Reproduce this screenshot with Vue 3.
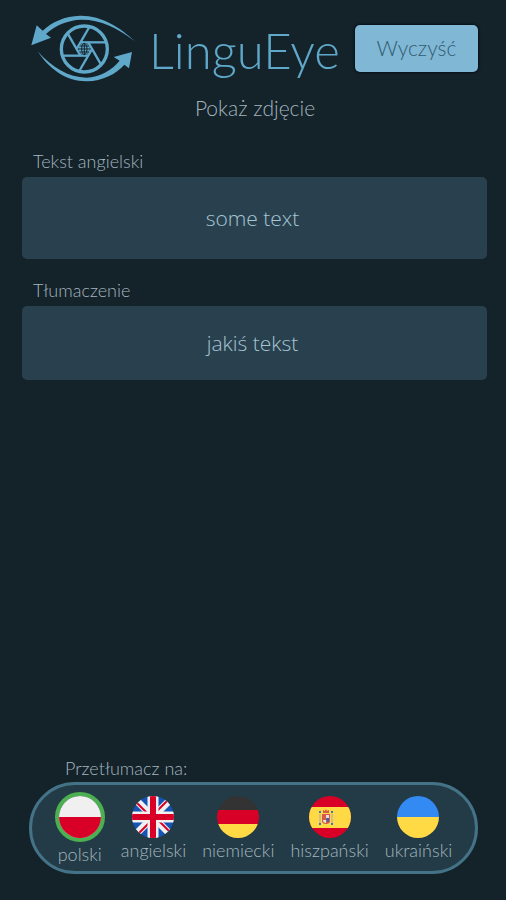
<script setup>
import { ref } from 'vue'

const source = ref('some text')
const translation = ref('jakiś tekst')
const selected = ref('pl')

const languages = [
  { code: 'pl', name: 'polski' },
  { code: 'en', name: 'angielski' },
  { code: 'de', name: 'niemiecki' },
  { code: 'es', name: 'hiszpański' },
  { code: 'uk', name: 'ukraiński' },
]

const bladeAngles = [0, 60, 120, 180, 240, 300]

function clearAll() {
  source.value = ''
  translation.value = ''
}
</script>

<template>
  <div class="app">
    <header class="header">
      <svg class="logo" viewBox="30 25 321 210" aria-hidden="true">
        <g fill="#5fa8c9">
          <path d="M345 110 C300 68 245 32 180 33 C135 34 95 52 68 78 L50 62 L34 122 L93 99 L78 88 C105 62 145 46 183 45 C240 44 290 68 345 110 Z" />
          <path d="M53 140 C85 190 135 230 200 230 C248 229 290 207 313 180 L327 191 L336 142 L281 157 L299 168 C275 197 238 218 200 219 C145 219 95 187 53 140 Z" />
        </g>
        <g fill="none" stroke="#5fa8c9" stroke-width="7">
          <circle cx="193" cy="133" r="69" stroke-width="10" />
          <path v-for="a in bladeAngles" :key="a" d="M181 113 H256" :transform="`rotate(${a} 193 133)`" />
        </g>
        <circle cx="193" cy="133" r="17" fill="#5fa8c9" />
        <g fill="none" stroke="#14222a" stroke-width="3">
          <ellipse cx="193" cy="133" rx="8" ry="17" />
          <path d="M193 115 V151 M175 133 H211 M179 124 H207 M179 142 H207" />
        </g>
      </svg>
      <h1 class="brand">LinguEye</h1>
      <button class="clear" type="button" @click="clearAll">Wyczyść</button>
    </header>

    <button class="show-photo" type="button">Pokaż zdjęcie</button>

    <main class="fields">
      <label class="label" for="source">Tekst angielski</label>
      <input id="source" v-model="source" class="box box-source" type="text" />
      <label class="label label-next" for="translation">Tłumaczenie</label>
      <input id="translation" v-model="translation" class="box" type="text" />
    </main>

    <footer class="footer">
      <p id="target-label" class="target-label">Przetłumacz na:</p>
      <div class="languages" role="group" aria-labelledby="target-label">
        <button
          v-for="lang in languages"
          :key="lang.code"
          class="language"
          type="button"
          :aria-pressed="selected === lang.code"
          @click="selected = lang.code"
        >
          <span class="flag" :class="{ active: selected === lang.code }">
            <svg viewBox="0 0 42 42" aria-hidden="true">
              <template v-if="lang.code === 'pl'">
                <rect width="42" height="42" fill="#f0f0f0" />
                <rect y="21" width="42" height="21" fill="#d80027" />
              </template>
              <template v-else-if="lang.code === 'en'">
                <rect width="42" height="42" fill="#1454b4" />
                <path d="M4 4 L38 38 M38 4 L4 38" stroke="#f0f0f0" stroke-width="7" />
                <path d="M4 6 L19 21 M23 21 L38 36 M36 4 L21 19 M21 23 L6 38" stroke="#d80027" stroke-width="2" />
                <path d="M21 0 V42 M0 21 H42" stroke="#f0f0f0" stroke-width="11" />
                <path d="M21 0 V42 M0 21 H42" stroke="#d80027" stroke-width="6" />
              </template>
              <template v-else-if="lang.code === 'de'">
                <rect width="42" height="14" fill="#333333" />
                <rect y="14" width="42" height="14" fill="#d80027" />
                <rect y="28" width="42" height="14" fill="#ffda44" />
              </template>
              <template v-else-if="lang.code === 'es'">
                <rect width="42" height="42" fill="#d80027" />
                <rect y="11" width="42" height="21" fill="#ffda44" />
                <path d="M11 18 V27 M23 18 V27" stroke="#d9b98a" stroke-width="2" />
                <path d="M10 16 H12 M22 16 H24 M10 28 H12 M22 28 H24" stroke="#3d78b5" stroke-width="2" />
                <path d="M13 18 V25 Q13 28 17 28 Q21 28 21 25 V18 Z" fill="#d85a48" />
                <path d="M14 24 H17 V27 Q14 27 14 24 Z" fill="#f0e4ce" />
                <path d="M17 19 H20 V22 H17 Z" fill="#e9dce0" />
                <path d="M17 22 H20 V26 H18 Z" fill="#3c67a8" />
                <path d="M14 17 V14 L16 15 L17 13 L18 15 L20 14 V17 Z" fill="#d85a48" />
              </template>
              <template v-else>
                <rect width="42" height="21" fill="#338af3" />
                <rect y="21" width="42" height="21" fill="#ffda44" />
              </template>
            </svg>
          </span>
          <span>{{ lang.name }}</span>
        </button>
      </div>
    </footer>
  </div>
</template>

<style>
body {
  margin: 0;
  background: #14222a;
}
</style>

<style scoped>
.app {
  box-sizing: border-box;
  display: flex;
  flex-direction: column;
  min-height: 100vh;
  padding: 13px 18px 26px 22px;
  background: #14222a;
  color: #a3b5bf;
  font-family: Lato, "Open Sans", sans-serif;
  font-size: 18px;
  font-weight: 300;
  line-height: 20px;
}

button {
  margin: 0;
  padding: 0;
  border: 0;
  background: none;
  color: inherit;
  font: inherit;
  cursor: pointer;
}

.header {
  display: flex;
  align-items: center;
  padding: 0 10px 0 8px;
}

.logo {
  flex: none;
  width: 107px;
  height: 70px;
}

.brand {
  margin: 4px 0 0 12px;
  color: #5fa8c9;
  font-size: 49px;
  font-weight: 300;
  line-height: 52px;
}

.clear {
  box-sizing: border-box;
  width: 123px;
  height: 47px;
  margin-left: auto;
  border-radius: 5px;
  background: #7fb7d5;
  box-shadow: 0 0 2px 1px #081116;
  color: #315d73;
  font-size: 21px;
}

.show-photo {
  align-self: center;
  margin-top: 13px;
  font-size: 21px;
  line-height: 24px;
}

.fields {
  display: flex;
  flex-direction: column;
  padding-right: 1px;
  margin-top: 31px;
}

.label {
  align-self: flex-start;
  margin: 0 0 6px 11px;
}

.label-next {
  margin-top: 21px;
}

.box {
  box-sizing: border-box;
  width: 100%;
  height: 74px;
  padding: 0 28px 0 24px;
  border: 0;
  border-radius: 5px;
  background: #29414e;
  color: #a5c5d5;
  font-family: "Open Sans", "Noto Sans", sans-serif;
  font-size: 21px;
  font-weight: 300;
  text-align: center;
}

.box-source {
  height: 82px;
}

.footer {
  margin-top: auto;
  padding: 0 10px 0 7px;
}

.target-label {
  margin: 0 0 4px 36px;
}

.languages {
  box-sizing: border-box;
  display: flex;
  justify-content: center;
  align-items: flex-start;
  gap: 16px;
  min-height: 92px;
  padding: 7px 0;
  border: 3px solid #447287;
  border-radius: 46px;
  background: #233b46;
}

.language {
  display: flex;
  flex-direction: column;
  align-items: center;
  gap: 2px;
}

.flag {
  display: block;
  width: 42px;
  height: 42px;
  margin-top: 4px;
  border-radius: 50%;
  overflow: hidden;
}

.flag svg {
  display: block;
  width: 100%;
  height: 100%;
}

.flag.active {
  margin-top: 0;
  border: 4px solid #4caf50;
}
</style>
